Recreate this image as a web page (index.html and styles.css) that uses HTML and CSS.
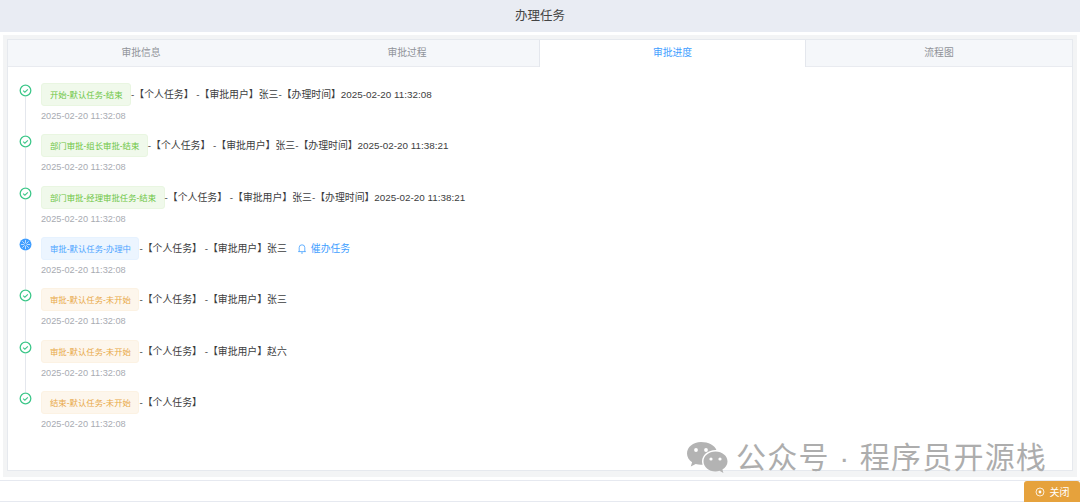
FILE: index.html
```html
<!DOCTYPE html>
<html lang="zh-CN">
<head>
<meta charset="utf-8">
<title>办理任务</title>
<link rel="stylesheet" href="styles.css">
</head>
<body>
<svg class="defs" width="0" height="0" aria-hidden="true">
  <symbol id="ok" viewBox="0 0 12 12">
    <circle cx="6" cy="6" r="4.9" fill="none" stroke="#3ec78a" stroke-width="1.2"/>
    <path d="M3.8 6.2 5.4 7.6 8.2 4.9" fill="none" stroke="#3ec78a" stroke-width="1"/>
  </symbol>
  <symbol id="run" viewBox="0 0 12 12">
    <circle cx="6" cy="6" r="5.5" fill="#409eff"/>
    <path d="M6 1.8V10.2M1.8 6H10.2M3 3 9 9M9 3 3 9" fill="none" stroke="#cfe6ff" stroke-width=".8"/>
    <circle cx="6" cy="6" r="1.2" fill="#409eff"/>
  </symbol>
</svg>
<header class="title">办理任务</header>
<main class="panel">
  <section class="card">
    <nav class="tabs">
      <div class="tab">审批信息</div>
      <div class="tab">审批过程</div>
      <div class="tab active">审批进度</div>
      <div class="tab">流程图</div>
    </nav>
    <ol class="timeline">
      <li class="item">
        <svg class="dot"><use href="#ok"/></svg>
        <div class="body">
          <div class="line"><span class="tag green">开始-默认任务-结束</span><span class="txt">-【个人任务】 -【审批用户】张三-【办理时间】2025-02-20 11:32:08</span></div>
          <div class="time">2025-02-20 11:32:08</div>
        </div>
      </li>
      <li class="item">
        <svg class="dot"><use href="#ok"/></svg>
        <div class="body">
          <div class="line"><span class="tag green">部门审批-组长审批-结束</span><span class="txt">-【个人任务】 -【审批用户】张三-【办理时间】2025-02-20 11:38:21</span></div>
          <div class="time">2025-02-20 11:32:08</div>
        </div>
      </li>
      <li class="item">
        <svg class="dot"><use href="#ok"/></svg>
        <div class="body">
          <div class="line"><span class="tag green">部门审批-经理审批任务-结束</span><span class="txt">-【个人任务】 -【审批用户】张三-【办理时间】2025-02-20 11:38:21</span></div>
          <div class="time">2025-02-20 11:32:08</div>
        </div>
      </li>
      <li class="item">
        <svg class="dot"><use href="#run"/></svg>
        <div class="body">
          <div class="line"><span class="tag blue">审批-默认任务-办理中</span><span class="txt">-【个人任务】 -【审批用户】张三</span>
            <a class="urge"><svg class="bell" viewBox="0 0 10 11"><path d="M1.2 8.600H8.800M2.200 8.600V4.600A2.800 2.800 0 0 1 7.800 4.600V8.600M4 10H6" fill="none" stroke="#409eff" stroke-width=".8"/></svg>催办任务</a>
          </div>
          <div class="time">2025-02-20 11:32:08</div>
        </div>
      </li>
      <li class="item">
        <svg class="dot"><use href="#ok"/></svg>
        <div class="body">
          <div class="line"><span class="tag orange">审批-默认任务-未开始</span><span class="txt">-【个人任务】 -【审批用户】张三</span></div>
          <div class="time">2025-02-20 11:32:08</div>
        </div>
      </li>
      <li class="item">
        <svg class="dot"><use href="#ok"/></svg>
        <div class="body">
          <div class="line"><span class="tag orange">审批-默认任务-未开始</span><span class="txt">-【个人任务】 -【审批用户】赵六</span></div>
          <div class="time">2025-02-20 11:32:08</div>
        </div>
      </li>
      <li class="item last">
        <svg class="dot"><use href="#ok"/></svg>
        <div class="body">
          <div class="line"><span class="tag orange">结束-默认任务-未开始</span><span class="txt">-【个人任务】</span></div>
          <div class="time">2025-02-20 11:32:08</div>
        </div>
      </li>
    </ol>
  </section>
</main>
<footer class="footer">
  <button class="close"><svg class="close-icon" viewBox="0 0 10 10"><circle cx="5" cy="5" r="4" fill="none" stroke="#fff" stroke-width=".8"/><circle cx="5" cy="5" r="1.4" fill="#fff"/></svg>关闭</button>
</footer>
<div class="mark">
  <svg class="mark-icon" viewBox="0 0 42 34">
    <path d="M15 1C7 1 1 6.200 1 12.500c0 3.600 2 6.700 5.100 8.800L4.800 25.500l4.900-2.500c1.700.5 3.500.8 5.300.8.600 0 1.100 0 1.600-.1-.4-1.100-.6-2.300-.6-3.500 0-6.300 6-11.300 13.400-11.300h1C28.800 4.400 22.500 1 15 1Z" fill="#b3b3b3"/>
    <path d="M41.500 20.500C41.500 15 36.200 10.600 29.500 10.600S17.500 15 17.500 20.500 22.800 30.400 29.500 30.400c1.400 0 2.800-.2 4-.6l3.900 2.200-1-3.500c3.100-1.800 5.100-4.700 5.100-8Z" fill="#b3b3b3"/>
    <circle cx="10" cy="9" r="1.900" fill="#fff"/><circle cx="20" cy="9" r="1.900" fill="#fff"/>
    <circle cx="25" cy="18" r="1.600" fill="#fff"/><circle cx="34" cy="18" r="1.600" fill="#fff"/>
  </svg>
  <span class="mark-text">公众号 · 程序员开源栈</span>
</div>
</body>
</html>
```
FILE: styles.css
```css
* { box-sizing: border-box; }
html, body { margin: 0; padding: 0; }
body {
  width: 1080px;
  height: 502px;
  overflow: hidden;
  position: relative;
  background: #fff;
  font-family: "Liberation Sans", "Noto Sans CJK SC", sans-serif;
  color: #303133;
}
.defs { position: absolute; }
.title {
  height: 32px;
  background: #e9ecf3;
  text-align: center;
  font-size: 12.500px;
  line-height: 32px;
  color: #444;
}
.panel {
  margin: 3px 3px 0;
  height: 442px;
  padding: 4px 4px 6px;
  background: #f3f4f5;
}
.card {
  height: 432px;
  background: #fff;
  border: 1px solid #e6e9ee;
}
.tabs {
  display: grid;
  grid-template-columns: repeat(4, 1fr);
  height: 27px;
  background: #f5f7fa;
  border-bottom: 1px solid #e9ebf0;
}
.tab {
  text-align: center;
  font-size: 9.800px;
  line-height: 26px;
  color: #909399;
}
.tab.active {
  background: #fff;
  color: #409eff;
  height: 27px;
  margin-left: -1px;
  border-left: 1px solid #e4e7ed;
  border-right: 1px solid #e4e7ed;
}
.timeline {
  list-style: none;
  margin: 0;
  padding: 16px 0 0 11px;
}
.item {
  position: relative;
  display: flex;
  height: 51.330px;
}
.item::before {
  content: "";
  position: absolute;
  left: 6px;
  top: 10px;
  bottom: -4px;
  width: 1px;
  background: #e4e7ed;
}
.item.last::before { display: none; }
.dot {
  flex: none;
  width: 13px;
  height: 13px;
  margin-top: 1px;
  position: relative;
  z-index: 1;
  background: #fff;
}
.body {
  margin-left: 9px;
}
.line {
  display: flex;
  align-items: center;
  height: 23px;
}
.tag {
  display: block;
  height: 23px;
  line-height: 22px;
  padding: 0 7.500px 0 8px;
  border-radius: 3px;
  font-size: 8.400px;
  border: 1px solid;
}
.green { background: #f0f9eb; border-color: #e9f6e1; color: #6cc543; }
.blue { background: #ecf5ff; border-color: #e6f2ff; color: #4aa3ff; }
.orange { background: #fdf6ec; border-color: #fcf2e3; color: #e8a847; }
.txt {
  font-size: 9.870px;
  line-height: 21px;
  height: 21px;
  white-space: pre;
  color: #3c3d40;
}
.urge {
  display: flex;
  align-items: center;
  height: 21px;
  margin-left: 10px;
  font-size: 9.870px;
  color: #409eff;
}
.bell { width: 10px; height: 11px; margin-right: 4px; }
.time {
  margin-top: 4px;
  font-size: 9.200px;
  line-height: 12px;
  color: #a8abb2;
}
.footer {
  position: relative;
  margin-top: 3px;
  height: 22px;
  border-top: 1px solid #e6e9f0;
  border-bottom: 1px solid #e6e9f0;
  display: flex;
  justify-content: flex-end;
}
.close {
  display: flex;
  align-items: center;
  justify-content: center;
  gap: 5px;
  width: 56px;
  height: 21px;
  padding: 0;
  border: 0;
  border-radius: 3px 3px 0 0;
  background: #e6a23c;
  color: #fff;
  font-family: inherit;
  font-size: 10px;
}
.close-icon { width: 10px; height: 10px; }
.mark {
  position: absolute;
  left: 686px;
  top: 439px;
  display: flex;
  align-items: center;
  gap: 8px;
  color: #adadad;
  pointer-events: none;
}
.mark-icon { width: 42px; height: 34px; }
.mark-text {
  font-size: 30px;
  line-height: 38px;
  letter-spacing: 1.200px;
  white-space: nowrap;
}
```
